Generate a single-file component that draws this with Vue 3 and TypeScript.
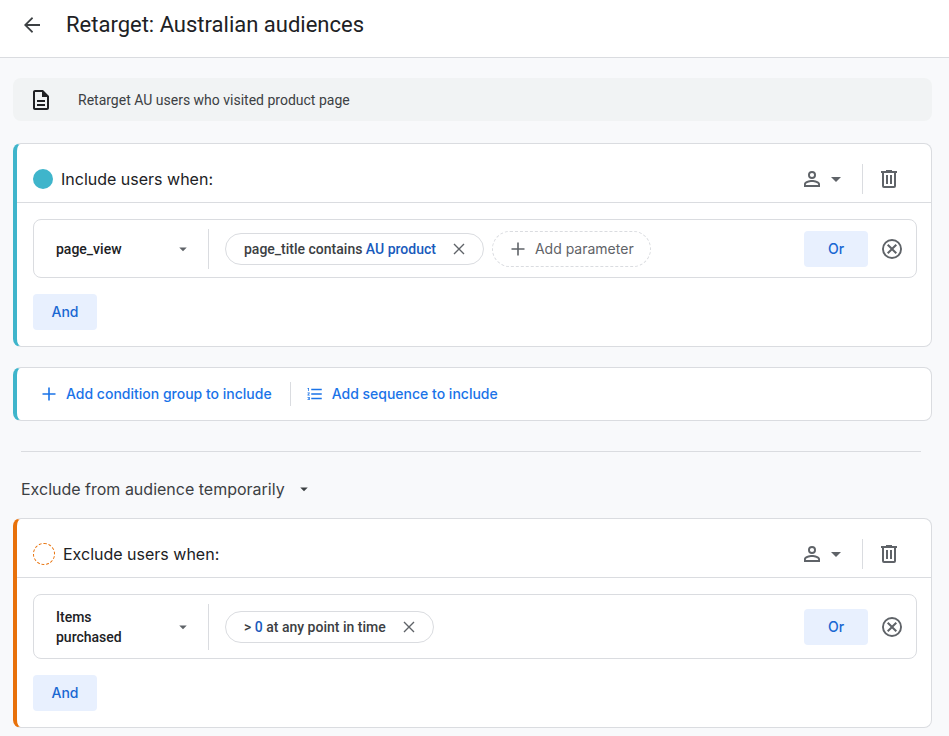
<script setup lang="ts">
import { ref } from 'vue'

interface Condition {
  id: string
  event: string
  multiline: boolean
  before: string
  value: string
  after: string
  canAddParameter: boolean
}

interface Group {
  id: string
  kind: 'include' | 'exclude'
  title: string
  conditions: Condition[]
}

const includeGroup: Group = {
  id: 'include',
  kind: 'include',
  title: 'Include users when:',
  conditions: [
    {
      id: 'page-view',
      event: 'page_view',
      multiline: false,
      before: 'page_title contains ',
      value: 'AU product',
      after: '',
      canAddParameter: true,
    },
  ],
}

const excludeGroup: Group = {
  id: 'exclude',
  kind: 'exclude',
  title: 'Exclude users when:',
  conditions: [
    {
      id: 'items',
      event: 'Items purchased',
      multiline: true,
      before: '> ',
      value: '0',
      after: ' at any point in time',
      canAddParameter: false,
    },
  ],
}

const sections = [
  { group: includeGroup, last: false },
  { group: excludeGroup, last: true },
]

const exclusionScope = ref('Exclude from audience temporarily')
</script>

<template>
  <div class="page">
    <header class="topbar">
      <button class="icon-button" type="button" aria-label="Back">
        <svg class="icon" viewBox="0 0 24 24"><path d="M20 12.1H7.5l5.6 5.7L12 19.2l-8-8 8-8 1.1 1.4-5.6 5.7H20z" transform="translate(0 .8)" /></svg>
      </button>
      <h1>Retarget: Australian audiences</h1>
    </header>

    <main>
      <section class="note">
        <svg class="icon" viewBox="0 0 24 24" aria-hidden="true">
          <path d="M8 16h8v2H8zm0-4h8v2H8zm6-10H6c-1.1 0-2 .9-2 2v16c0 1.1.89 2 1.99 2H18c1.1 0 2-.9 2-2V8l-6-6zm4 18H6V4h7v5h5v11z" />
        </svg>
        <p>Retarget AU users who visited product page</p>
      </section>

      <template v-for="{ group, last } in sections" :key="group.id">
        <template v-if="last">
          <section class="card include actions">
            <button class="link-button" type="button">
              <svg class="icon small" viewBox="0 0 18 18" aria-hidden="true"><path d="M8.2 2.5h1.6v5.7h5.7v1.6H9.8v5.7H8.2V9.8H2.5V8.2h5.7z" /></svg>
              <span>Add condition group to include</span>
            </button>
            <span class="rule"></span>
            <button class="link-button" type="button">
              <svg class="icon small" viewBox="0 0 24 24" aria-hidden="true">
                <path d="M2 17h2v.5H3v1h1v.5H2v1h3v-4H2v1zm1-9h1V4H2v1h1v3zm-1 3h1.8L2 13.1v.9h3v-1H3.2L5 10.9V10H2v1zm5-6v2h14V5H7zm0 14h14v-2H7v2zm0-6h14v-2H7v2z" />
              </svg>
              <span>Add sequence to include</span>
            </button>
          </section>

          <hr />

          <div class="scope select-wrap">
            <select v-model="exclusionScope" aria-label="Exclusion duration">
              <option>Exclude from audience temporarily</option>
            </select>
            <svg class="icon small" viewBox="0 0 24 24" aria-hidden="true"><path d="M7 10l5 5 5-5z" /></svg>
          </div>
        </template>

        <section class="card" :class="group.kind">
          <div class="card-head">
            <span class="dot"></span>
            <h2>{{ group.title }}</h2>
            <button class="person-button" type="button" aria-label="Condition scope" aria-haspopup="menu">
              <svg class="icon" viewBox="0 0 24 24">
                <path d="M12 4a4 4 0 1 0 0 8 4 4 0 0 0 0-8zm0 1.9a2.1 2.1 0 1 1 0 4.2 2.1 2.1 0 0 1 0-4.2zM12 13c-2.67 0-8 1.34-8 4v3h16v-3c0-2.66-5.33-4-8-4zm6.1 5.1H5.9V17c0-.64 3.13-2.1 6.1-2.1s6.1 1.46 6.1 2.1v1.1z" />
              </svg>
              <svg class="icon" viewBox="0 0 24 24"><path d="M7 10l5 5 5-5z" /></svg>
            </button>
            <span class="rule"></span>
            <button class="icon-button" type="button" aria-label="Delete group">
              <svg class="icon" viewBox="0 0 24 24">
                <path d="M9 3h6v1h5v2h-1v13a2 2 0 0 1-2 2H7a2 2 0 0 1-2-2V6H4V4h5zM7 6v13h10V6zM9 8h2v9H9zM13 8h2v9h-2z" fill-rule="evenodd" />
              </svg>
            </button>
          </div>

          <div class="card-body">
            <div v-for="condition in group.conditions" :key="condition.id" class="condition">
              <div class="event">
                <button v-if="condition.multiline" class="event-button" type="button" aria-haspopup="listbox">
                  <span>{{ condition.event }}</span>
                  <svg class="icon small" viewBox="0 0 24 24" aria-hidden="true"><path d="M7 10l5 5 5-5z" /></svg>
                </button>
                <div v-else class="event-select select-wrap">
                  <select aria-label="Event">
                    <option>{{ condition.event }}</option>
                  </select>
                  <svg class="icon small" viewBox="0 0 24 24" aria-hidden="true"><path d="M7 10l5 5 5-5z" /></svg>
                </div>
              </div>

              <div class="params">
                <div class="chip">
                  <span class="chip-text">{{ condition.before }}<b>{{ condition.value }}</b>{{ condition.after }}</span>
                  <button class="chip-close" type="button" aria-label="Remove parameter">
                    <svg viewBox="0 0 12 12"><path d="M1 1l10 10M11 1L1 11" /></svg>
                  </button>
                </div>
                <button v-if="condition.canAddParameter" class="add-param" type="button">
                  <svg class="icon small" viewBox="0 0 18 18" aria-hidden="true"><path d="M8.2 2.5h1.6v5.7h5.7v1.6H9.8v5.7H8.2V9.8H2.5V8.2h5.7z" /></svg>
                  <span>Add parameter</span>
                </button>
              </div>

              <button class="tonal" type="button">Or</button>
              <button class="icon-button" type="button" aria-label="Remove condition">
                <svg class="icon" viewBox="0 0 24 24">
                  <path d="M12 2a10 10 0 1 0 0 20 10 10 0 0 0 0-20zm0 1.9a8.1 8.1 0 1 1 0 16.2 8.1 8.1 0 0 1 0-16.2zM15.6 7L12 10.6 8.4 7 7 8.4l3.6 3.6L7 15.6 8.4 17l3.6-3.6 3.6 3.6 1.4-1.4-3.6-3.6L17 8.4z" fill-rule="evenodd" />
                </svg>
              </button>
            </div>
            <button class="tonal" type="button">And</button>
          </div>
        </section>
      </template>
    </main>
  </div>
</template>

<style>
body {
  background: #f8f9fb;
}
</style>

<style scoped>
.page {
  font-family: Roboto, 'Liberation Sans', sans-serif;
  font-size: 14px;
  line-height: 20px;
  color: #202124;
}

.page *,
.page {
  box-sizing: border-box;
}

h1,
h2,
p {
  margin: 0;
}

button,
select {
  margin: 0;
  padding: 0;
  border: 0;
  background: none;
  font: inherit;
  color: inherit;
  cursor: pointer;
}

.icon {
  display: block;
  flex: none;
  width: 24px;
  height: 24px;
  fill: currentColor;
}

.icon.small {
  width: 18px;
  height: 18px;
}

.icon-button {
  display: flex;
  color: #5f6368;
}

.topbar {
  display: flex;
  align-items: center;
  gap: 22px;
  padding: 11px 20px 18px;
  background: #fff;
  border-bottom: 1px solid #dadce0;
}

.topbar .icon-button {
  color: #3c4043;
}

h1 {
  font-size: 22px;
  font-weight: 400;
  line-height: 28px;
}

main {
  padding: 20px 17px 8px 13px;
}

.note {
  display: flex;
  align-items: center;
  gap: 25px;
  min-height: 43px;
  margin-bottom: 22px;
  padding: 0 16px;
  border-radius: 8px;
  background: #f1f3f4;
}

.note p {
  color: #3c4043;
}

.card {
  margin-bottom: 20px;
  border: 1px solid #dadce0;
  border-left-width: 4px;
  border-radius: 8px;
  background: #fff;
}

.card:last-child {
  margin-bottom: 0;
}

.include {
  border-left-color: #3fb5cb;
}

.exclude {
  border-left-color: #e8710a;
}

.card-head {
  display: flex;
  align-items: center;
  padding: 20px 30px 8px 16px;
  border-bottom: 1px solid #dadce0;
}

.dot {
  width: 20px;
  height: 20px;
  margin-right: 8px;
  border-radius: 50%;
  background: #3fb5cb;
}

.exclude .dot {
  width: 22px;
  height: 22px;
  border: 1px dashed #e8710a;
  background: none;
}

h2 {
  flex: 1;
  font-family: Inter, sans-serif;
  font-size: 16px;
  font-weight: 400;
  line-height: 24px;
}

.person-button {
  display: flex;
  color: #5f6368;
}

.rule {
  width: 1px;
  height: 24px;
  background: #dadce0;
}

.card-head .rule {
  height: 30px;
  margin: 0 14px;
}

.card-body {
  padding: 16px 14px 16px 16px;
}

.condition {
  display: flex;
  align-items: center;
  margin-bottom: 16px;
  padding: 9px 12px 8px 0;
  border: 1px solid #dadce0;
  border-radius: 8px;
}

.event {
  display: flex;
  align-items: center;
  width: 175px;
  min-height: 40px;
  padding: 3px 16px 3px 22px;
  border-right: 1px solid #dadce0;
  font-weight: 500;
}

.event-button {
  display: flex;
  flex: 1;
  align-items: center;
  justify-content: space-between;
  gap: 40px;
  text-align: left;
}

.select-wrap {
  display: grid;
  align-items: center;
}

.select-wrap select,
.select-wrap svg {
  grid-area: 1 / 1;
}

.select-wrap select {
  appearance: none;
}

.select-wrap svg {
  justify-self: end;
  pointer-events: none;
}

.event-select {
  flex: 1;
}

.event svg {
  color: #5f6368;
}

.params {
  display: flex;
  flex: 1;
  flex-wrap: wrap;
  align-items: center;
  gap: 8px;
  padding: 0 16px;
}

.chip {
  display: flex;
  align-items: center;
  gap: 17px;
  height: 32px;
  padding: 0 18px;
  border: 1px solid #dadce0;
  border-radius: 16px;
  font-weight: 500;
  color: #3c4043;
}

.chip-text {
  white-space: pre;
}

.chip b {
  font-weight: 500;
  color: #185abc;
}

.chip-close svg {
  display: block;
  width: 12px;
  height: 12px;
  fill: none;
  stroke: #5f6368;
  stroke-width: 1.4;
}

.add-param {
  display: flex;
  align-items: center;
  gap: 8px;
  height: 36px;
  padding: 0 16px;
  border: 1px dashed #dadce0;
  border-radius: 18px;
  font-family: Inter, sans-serif;
  color: #5f6368;
}

.tonal {
  min-width: 64px;
  height: 36px;
  border-radius: 4px;
  background: #e8f0fe;
  font-family: Inter, sans-serif;
  font-weight: 500;
  color: #1967d2;
}

.condition .tonal {
  margin-right: 12px;
}

.actions {
  display: flex;
  align-items: center;
  min-height: 54px;
  padding: 0 16px 0 23px;
}

.actions .rule {
  margin: 0 15px 0 18px;
}

.link-button {
  display: flex;
  align-items: center;
  gap: 8px;
  font-family: Inter, sans-serif;
  font-weight: 500;
  color: #1a73e8;
}

hr {
  height: 1px;
  margin: 30px 11px 25px 8px;
  border: 0;
  background: #dadce0;
}

.scope {
  width: fit-content;
  margin: 0 0 17px 8px;
  font-family: Inter, sans-serif;
  font-size: 16px;
  color: #3c4043;
}

.scope select {
  height: 24px;
  padding-right: 28px;
}
</style>
